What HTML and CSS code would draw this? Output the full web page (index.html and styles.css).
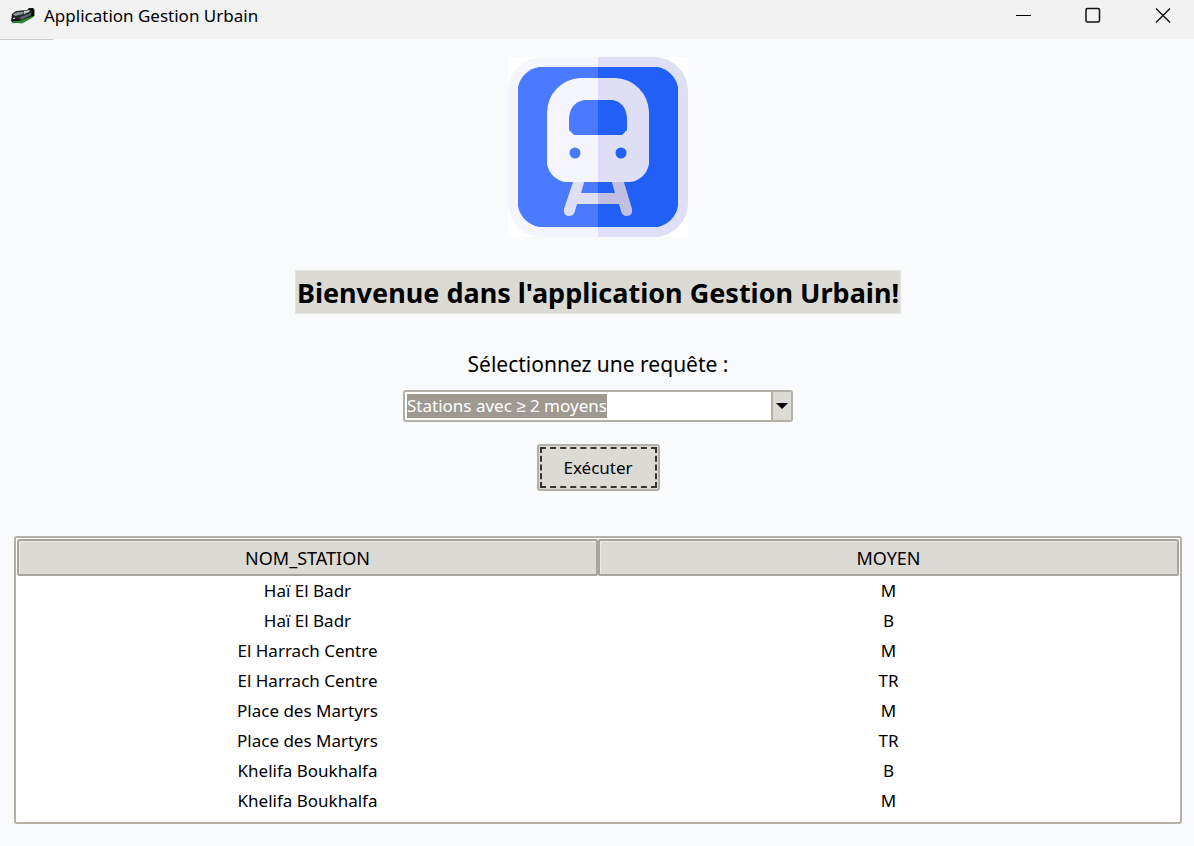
FILE: index.html
```html
<!DOCTYPE html>
<html lang="fr">
<head>
<meta charset="utf-8">
<title>Application Gestion Urbain</title>
<link rel="stylesheet" href="styles.css">
</head>
<body>
<header class="titlebar">
  <svg class="app-icon" viewBox="0 0 24 16" aria-hidden="true">
    <path d="M1 6 5 3 16 2 18 0 22 0 23.500 2 23.500 8 11 15 2 15 0 13Z" fill="#24282b"/>
    <path d="M2 6 7 4 13 4 12 6 4 8Z" fill="#8b9499"/>
    <path d="M13 3 19 2 18 4 13 6Z" fill="#c5cbce"/>
    <path d="M9 9 20 5 20 7 10 12Z" fill="#59636a"/>
    <path d="M17 1 22 0 23 2 23 8 20 9 21 3Z" fill="#08090a"/>
    <path d="M2 13 9 13 22 8 22 9.500 11 15.500 2 14.500Z" fill="#2c8b35"/>
    <path d="M1 11 7 11 8 13 2 13Z" fill="#111"/>
    <path d="M0 15h3v1H0zM2 10h2v1H2z" fill="#d6dadb"/>
  </svg>
  <span class="app-name">Application Gestion Urbain</span>
  <div class="window-controls">
    <button class="window-button" type="button" aria-label="Réduire">
      <svg class="window-icon" viewBox="0 0 16 16"><path d="M1 8.500H16" stroke="#000" fill="none"/></svg>
    </button>
    <button class="window-button" type="button" aria-label="Agrandir">
      <svg class="window-icon" viewBox="0 0 16 16"><rect x="1" y="1.500" width="13.500" height="13.500" rx="1.500" stroke="#111" stroke-width="1.500" fill="none"/></svg>
    </button>
    <button class="window-button" type="button" aria-label="Fermer">
      <svg class="window-icon" viewBox="0 0 16 16"><path d="M1 1.500 15 15.500M15 1.500 1 15.500" stroke="#111" stroke-width="1.400" fill="none"/></svg>
    </button>
  </div>
</header>
<main class="content">
  <svg class="logo" viewBox="0 0 180 180" role="img" aria-label="Train">
    <defs>
      <clipPath id="right-half"><path d="M90 0H180V180H90Z"/></clipPath>
      <path id="frame" d="M34 0H146A34 34 0 0 1 180 34V146A34 34 0 0 1 146 180H34A34 34 0 0 1 0 146V34A34 34 0 0 1 34 0Z"/>
      <path id="panel" d="M31 10H150A26 26 0 0 1 170 30V149A26 26 0 0 1 150 170H31A26 26 0 0 1 10 149V30A26 26 0 0 1 31 10Z"/>
      <path id="rails" d="M66 122H77L73 136H107L103 122H115L124 152Q125 159 119 159Q114 159 113 154L111 147H69L67 154Q66 159 61 159Q55 159 56 152Z"/>
      <path id="train" d="M72 21H108A35 35 0 0 1 141 55V107A22 22 0 0 1 122 125H58A22 22 0 0 1 39 107V55A35 35 0 0 1 72 21Z"/>
      <path id="glass" d="M76 43H105Q118 46 119 61V73L114 78H66L61 73V61Q62 46 76 43Z"/>
    </defs>
    <path d="M0 0H180V180H0Z" fill="#fff"/>
    <use href="#frame" fill="#f5f6fd"/>
    <use href="#panel" fill="#4a7aff"/>
    <use href="#rails" fill="#dedef4"/>
    <use href="#train" fill="#f5f6fd"/>
    <use href="#glass" fill="#4a7aff"/>
    <circle cx="67" cy="96" r="5.500" fill="#4a7aff"/>
    <g clip-path="url(#right-half)">
      <use href="#frame" fill="#dedef4"/>
      <use href="#panel" fill="#215ff6"/>
      <use href="#rails" fill="#c1c0e4"/>
      <use href="#train" fill="#dedef4"/>
      <use href="#glass" fill="#215ff6"/>
      <circle cx="113" cy="96" r="5.500" fill="#215ff6"/>
    </g>
  </svg>
  <h1 class="welcome">Bienvenue dans l'application Gestion Urbain!</h1>
  <form class="query">
    <label class="query-label" for="query">Sélectionnez une requête :</label>
    <div class="combo">
      <select class="combo-select" id="query">
        <option>Stations avec ≥ 2 moyens</option>
      </select>
      <span class="combo-arrow"><svg class="arrow-icon" viewBox="0 0 12 6" aria-hidden="true"><path d="M0 0H12L6 6Z"/></svg></span>
    </div>
    <button class="run-button" type="button"><span class="run-focus">Exécuter</span></button>
  </form>
  <div class="results">
    <table class="results-table">
      <thead><tr><th>NOM_STATION</th><th>MOYEN</th></tr></thead>
      <tbody>
        <tr><td>Haï El Badr</td><td>M</td></tr>
        <tr><td>Haï El Badr</td><td>B</td></tr>
        <tr><td>El Harrach Centre</td><td>M</td></tr>
        <tr><td>El Harrach Centre</td><td>TR</td></tr>
        <tr><td>Place des Martyrs</td><td>M</td></tr>
        <tr><td>Place des Martyrs</td><td>TR</td></tr>
        <tr><td>Khelifa Boukhalfa</td><td>B</td></tr>
        <tr><td>Khelifa Boukhalfa</td><td>M</td></tr>
      </tbody>
    </table>
  </div>
</main>
</body>
</html>
```
FILE: styles.css
```css
* { box-sizing: border-box; }

body {
  margin: 0;
  min-height: 100vh;
  display: flex;
  flex-direction: column;
  background: #f8fafc;
  color: #000;
  font-family: "Segoe UI", "Noto Sans", sans-serif;
  font-size: 17px;
}

button, select { font: inherit; color: inherit; }

.titlebar {
  display: flex;
  align-items: center;
  height: 39px;
  padding: 0 0 8px 11px;
  background: #f2f2f2;
}
.app-icon { width: 24px; height: 16px; margin-right: 9px; }
.app-name { line-height: 24px; }
.window-controls { display: flex; align-self: stretch; margin-left: auto; }
.window-button {
  display: flex;
  align-items: center;
  justify-content: center;
  width: 70px;
  padding: 0 0 2px 8px;
  border: 0;
  background: none;
}
.window-icon { width: 16px; height: 16px; }

.content {
  flex: 1;
  display: flex;
  flex-direction: column;
  align-items: center;
  padding: 18px 12px 22px 14px;
}
.content::before {
  content: "";
  align-self: flex-start;
  width: 53px;
  height: 1px;
  margin: -18px 0 17px -14px;
  background: #ccc;
}
.logo { width: 180px; height: 180px; }

.welcome {
  margin: 33px 0 0;
  padding: 1px 1px 0;
  border: 1px solid #e4e4e0;
  background: #dcdad5;
  font-size: 27px;
  line-height: 41px;
  font-weight: 700;
}

.query { display: flex; flex-direction: column; align-items: center; }
.query-label { margin-top: 35px; font-size: 21px; line-height: 30px; }

.combo {
  display: flex;
  width: 390px;
  height: 32px;
  margin-top: 11px;
  border: 2px solid #b5b0a7;
  border-radius: 3px;
  background: #fff;
}
.combo-select {
  field-sizing: content;
  appearance: none;
  align-self: center;
  height: 24px;
  margin: 0 auto 0 2px;
  padding: 0;
  border: 0;
  border-radius: 0;
  background: #9e9a91;
  color: #fff;
  line-height: 24px;
}
.combo-arrow {
  display: flex;
  align-items: center;
  justify-content: center;
  width: 20px;
  border-left: 2px solid #b5b0a7;
  background: #dcdad5;
}
.arrow-icon { width: 12px; height: 6px; }

.run-button {
  width: 123px;
  height: 47px;
  margin-top: 22px;
  padding: 1px;
  border: 2px solid #b5b0a7;
  border-radius: 3px;
  background: #dcdad5;
}
.run-focus {
  display: flex;
  align-items: center;
  justify-content: center;
  height: 100%;
  border: 2px dashed #333;
}

.results {
  flex: 1;
  align-self: stretch;
  margin-top: 45px;
  padding: 1px;
  border: 2px solid #b5b0a7;
  border-radius: 3px;
  background: #fff;
}
.results-table {
  width: 100%;
  table-layout: fixed;
  border-collapse: separate;
  border-spacing: 0;
}
.results-table th {
  height: 37px;
  padding: 0;
  border: 2px solid #a8a49b;
  border-radius: 2px;
  background: #dcdad5;
  box-shadow: inset 1px 1px #eeebe7;
  font-size: 18px;
  line-height: 24px;
  font-weight: 400;
}
.results-table td { height: 30px; padding: 0; text-align: center; line-height: 28px; }
```
